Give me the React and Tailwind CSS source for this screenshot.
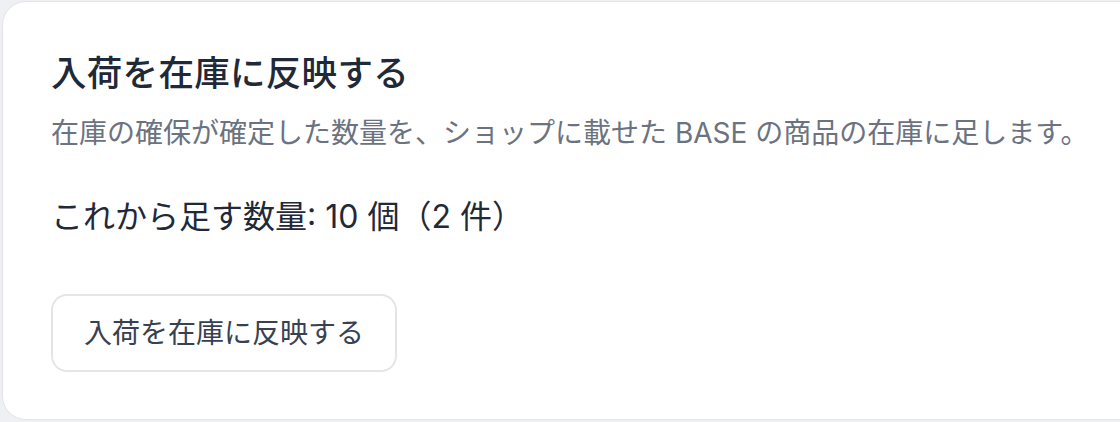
export default function App() {
  const font = { fontFamily: '"Inter", "Noto Sans CJK JP", sans-serif' }
  return (
    <div className="h-[422px] w-[1120px] overflow-hidden bg-[#eef0f3] pl-[2px] pt-[1px]" style={font}>
      <div className="w-[1200px] rounded-[24px] border border-[#e3e5e9] bg-white px-[48px] pt-[50px] pb-[47px]">
        <h2 className="text-[35.5px] leading-[44px] font-medium tracking-[0.3px] text-[#1f2937]">入荷を在庫に反映する</h2>
        <p className="mt-[17px] text-[28px] leading-[40px] text-[#6b7280]">
          在庫の確保が確定した数量を、ショップに載せた BASE の商品の在庫に足します。
        </p>
        <p className="mt-[42px] text-[32px] leading-[44px] text-[#1f2937]">これから足す数量: 10 個（2 件）</p>
        <button className="mt-[55px] h-[78px] rounded-[16px] border-2 border-[#e3e5e9] bg-white px-[31px] text-[28px] text-[#374151]">
          入荷を在庫に反映する
        </button>
      </div>
    </div>
  )
}
